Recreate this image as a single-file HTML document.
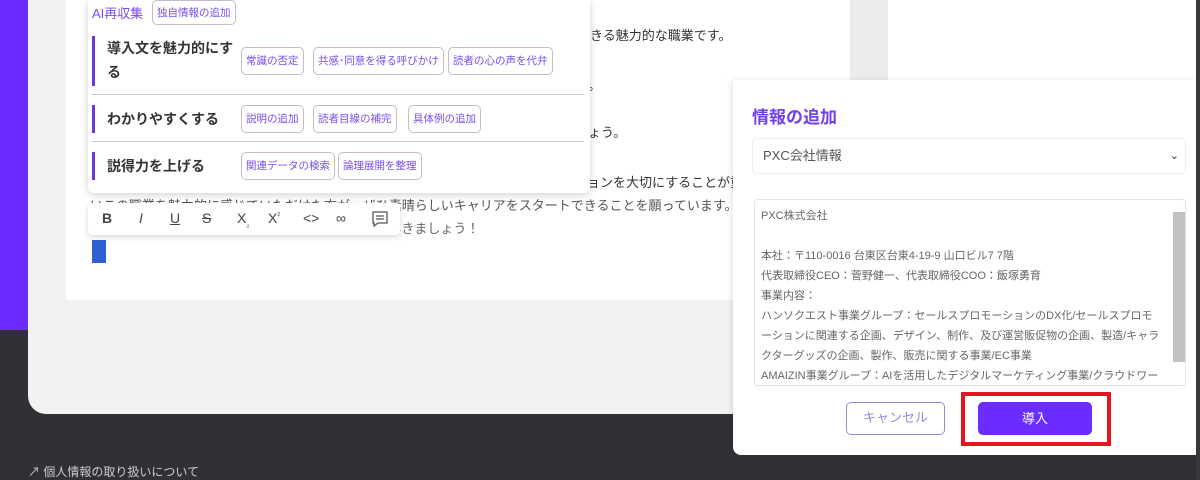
<!DOCTYPE html>
<html><head><meta charset="utf-8"><style>
*{margin:0;padding:0;box-sizing:border-box}
body{width:1200px;height:480px;overflow:hidden;position:relative;background:#323035;font-family:"Liberation Sans","Noto Sans CJK JP",sans-serif;color:#333}
.abs{position:absolute}
.chip{position:absolute;height:28px;border:1px solid #c9b9c9;border-radius:5px;color:#7a4cf0;font-size:10.5px;line-height:26px;padding:0 4px;background:#fff;white-space:nowrap}
.lbl{position:absolute;left:92px;border-left:3px solid #6a3ad8;padding-left:12px;font-size:14px;font-weight:bold;color:#333;line-height:28px}
.sep{position:absolute;left:92px;width:492px;height:1px;background:#c8c8d0}
.t{position:absolute;font-size:13px;color:#333;white-space:nowrap}
.ti{position:absolute;top:210px;font-size:14px;color:#444}
</style></head><body>
<div class="abs" style="left:0;top:0;width:28px;height:330px;background:#6a2cff"></div>
<div class="abs" style="left:28px;top:0;width:900px;height:414px;background:#f2f2f3;border-radius:0 0 0 18px"></div>
<div class="abs" style="left:66px;top:0;width:784px;height:300px;background:#fff"></div>
<div class="abs" style="left:888px;top:0;width:308px;height:80px;background:#fff"></div>
<div class="abs" style="left:850px;top:0;width:38px;height:80px;background:#ececee"></div>
<div class="abs" style="left:1196px;top:0;width:4px;height:480px;background:#3a383d"></div>

<div class="t" style="left:590px;top:25px">きる魅力的な職業です。</div>
<div class="t" style="left:588px;top:75px">。</div>
<div class="t" style="left:588px;top:122px">ょう。</div>
<div class="t" style="left:587px;top:172px">ョンを大切にすることが重要</div>
<div class="t" style="left:90px;top:195px;color:#555">いこの職業を魅力的に感じていただけた方が、ぜひ素晴らしいキャリアをスタートできることを願っています。**</div>
<div class="t" style="left:90px;top:218px;color:#666">この仕事を通じて、あなたの可能性をさらに広げていきましょう！</div>
<div class="abs" style="left:92px;top:240px;width:14px;height:23px;background:#2f5fd0"></div>

<div class="abs" style="left:88px;top:0;width:502px;height:193px;background:#fff;box-shadow:0 2px 8px rgba(0,0,0,.18);border-radius:0 0 6px 6px"></div>
<div class="abs" style="left:92px;top:3px;font-size:13px;color:#7a4cf0">AI再収集</div>
<div class="chip" style="left:152px;top:0;height:25px;line-height:24px">独自情報の追加</div>
<div class="lbl" style="left:92px;top:36px;height:50px;line-height:24px;width:145px">導入文を魅力的にす<br>る</div>
<div class="chip" style="left:241px;top:47px">常識の否定</div>
<div class="chip" style="left:313px;top:47px">共感･同意を得る呼びかけ</div>
<div class="chip" style="left:448px;top:47px">読者の心の声を代弁</div>
<div class="sep" style="top:94px"></div>
<div class="lbl" style="top:105px;height:28px">わかりやすくする</div>
<div class="chip" style="left:241px;top:105px">説明の追加</div>
<div class="chip" style="left:313px;top:105px">読者目線の補完</div>
<div class="chip" style="left:408px;top:105px">具体例の追加</div>
<div class="sep" style="top:141px"></div>
<div class="lbl" style="top:152px;height:28px">説得力を上げる</div>
<div class="chip" style="left:241px;top:152px">関連データの検索</div>
<div class="chip" style="left:338px;top:152px">論理展開を整理</div>

<div class="abs" style="left:88px;top:203px;width:312px;height:32px;background:#fff;box-shadow:0 2px 6px rgba(0,0,0,.15);border-radius:4px"></div>
<div class="ti" style="left:102px;font-weight:bold">B</div>
<div class="ti" style="left:139px;font-style:italic">I</div>
<div class="ti" style="left:170px;text-decoration:underline">U</div>
<div class="ti" style="left:202px;text-decoration:line-through">S</div>
<div class="ti" style="left:237px">X<sub style="font-size:8px">₂</sub></div>
<div class="ti" style="left:268px">X<sup style="font-size:8px">²</sup></div>
<div class="ti" style="left:303px">&lt;&gt;</div>
<div class="ti" style="left:336px">∞</div>
<svg class="abs" style="left:371px;top:210px" width="18" height="18" viewBox="0 0 18 18"><path d="M2 2h14v11H7l-4 3v-3H2z M5 6h8 M5 9h8" fill="none" stroke="#555" stroke-width="1.3"/></svg>

<div class="abs" style="left:733px;top:80px;width:463px;height:375px;background:#fff;border-radius:0 0 0 8px;box-shadow:-2px 0 6px rgba(0,0,0,.1)"></div>
<div class="abs" style="left:752px;top:103px;font-size:17px;font-weight:bold;color:#7040e8">情報の追加</div>
<div class="abs" style="left:752px;top:138px;width:434px;height:36px;border:1px solid #eee;border-radius:4px;font-size:13px;color:#555;line-height:34px;padding-left:10px">PXC会社情報<span style="position:absolute;right:6px;font-size:11px;color:#333">⌄</span></div>
<div class="abs" style="left:754px;top:199px;width:432px;height:187px;border:1px solid #e4e4e4;border-radius:3px;font-size:11px;color:#666;line-height:20px;padding:6px 22px 0 6px;overflow:hidden">PXC株式会社<br><br>本社：〒110-0016 台東区台東4-19-9 山口ビル7 7階<br>代表取締役CEO：菅野健一、代表取締役COO：飯塚勇育<br>事業内容：<br>ハンソクエスト事業グループ：セールスプロモーションのDX化/セールスプロモーションに関連する企画、デザイン、制作、及び運営販促物の企画、製造/キャラクターグッズの企画、製作、販売に関する事業/EC事業<br>AMAIZIN事業グループ：AIを活用したデジタルマーケティング事業/クラウドワー</div>
<div class="abs" style="left:1173px;top:212px;width:12px;height:150px;background:#c2c2c2"></div>
<div class="abs" style="left:846px;top:402px;width:99px;height:33px;border:1.5px solid #9a88d8;border-radius:5px;color:#9a88d8;font-size:13px;text-align:center;line-height:30px">キャンセル</div>
<div class="abs" style="left:961px;top:392px;width:150px;height:54px;border:4px solid #e5141e"></div>
<div class="abs" style="left:978px;top:402px;width:114px;height:33px;background:#6a2cff;border-radius:5px;color:#fff;font-size:13px;text-align:center;line-height:33px">導入</div>

<div class="abs" style="left:28px;top:463px;font-size:12px;color:#ccc">↗ 個人情報の取り扱いについて</div>
</body></html>
